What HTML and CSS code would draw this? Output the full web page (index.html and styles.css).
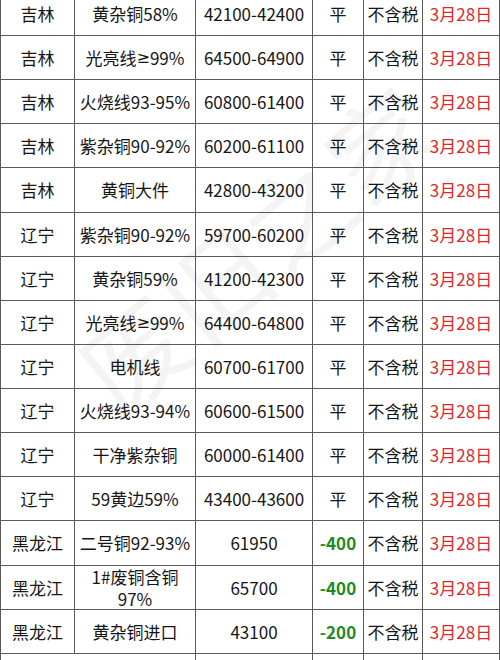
FILE: index.html
```html
<!DOCTYPE html>
<html lang="zh-CN">
<head>
<meta charset="utf-8">
<title>铜价表</title>
<link rel="stylesheet" href="styles.css">
</head>
<body>
<div class="page">
  <div class="table">
    <div class="row"><div class="c">吉林</div><div class="c">黄杂铜58%</div><div class="c">42100-42400</div><div class="c">平</div><div class="c">不含税</div><div class="c date">3月28日</div></div>
    <div class="row"><div class="c">吉林</div><div class="c">光亮线<span class="ge">≥</span>99%</div><div class="c">64500-64900</div><div class="c">平</div><div class="c">不含税</div><div class="c date">3月28日</div></div>
    <div class="row"><div class="c">吉林</div><div class="c">火烧线93-95%</div><div class="c">60800-61400</div><div class="c">平</div><div class="c">不含税</div><div class="c date">3月28日</div></div>
    <div class="row"><div class="c">吉林</div><div class="c">紫杂铜90-92%</div><div class="c">60200-61100</div><div class="c">平</div><div class="c">不含税</div><div class="c date">3月28日</div></div>
    <div class="row"><div class="c">吉林</div><div class="c">黄铜大件</div><div class="c">42800-43200</div><div class="c">平</div><div class="c">不含税</div><div class="c date">3月28日</div></div>
    <div class="row"><div class="c">辽宁</div><div class="c">紫杂铜90-92%</div><div class="c">59700-60200</div><div class="c">平</div><div class="c">不含税</div><div class="c date">3月28日</div></div>
    <div class="row"><div class="c">辽宁</div><div class="c">黄杂铜59%</div><div class="c">41200-42300</div><div class="c">平</div><div class="c">不含税</div><div class="c date">3月28日</div></div>
    <div class="row"><div class="c">辽宁</div><div class="c">光亮线<span class="ge">≥</span>99%</div><div class="c">64400-64800</div><div class="c">平</div><div class="c">不含税</div><div class="c date">3月28日</div></div>
    <div class="row"><div class="c">辽宁</div><div class="c">电机线</div><div class="c">60700-61700</div><div class="c">平</div><div class="c">不含税</div><div class="c date">3月28日</div></div>
    <div class="row"><div class="c">辽宁</div><div class="c">火烧线93-94%</div><div class="c">60600-61500</div><div class="c">平</div><div class="c">不含税</div><div class="c date">3月28日</div></div>
    <div class="row"><div class="c">辽宁</div><div class="c">干净紫杂铜</div><div class="c">60000-61400</div><div class="c">平</div><div class="c">不含税</div><div class="c date">3月28日</div></div>
    <div class="row"><div class="c">辽宁</div><div class="c">59黄边59%</div><div class="c">43400-43600</div><div class="c">平</div><div class="c">不含税</div><div class="c date">3月28日</div></div>
    <div class="row"><div class="c">黑龙江</div><div class="c">二号铜92-93%</div><div class="c">61950</div><div class="c down">-400</div><div class="c">不含税</div><div class="c date">3月28日</div></div>
    <div class="row"><div class="c">黑龙江</div><div class="c two">1#废铜含铜<br>97%</div><div class="c">65700</div><div class="c down">-400</div><div class="c">不含税</div><div class="c date">3月28日</div></div>
    <div class="row"><div class="c">黑龙江</div><div class="c">黄杂铜进口</div><div class="c">43100</div><div class="c down">-200</div><div class="c">不含税</div><div class="c date">3月28日</div></div>
    <div class="row tall"><div class="c">黑龙江</div><div class="c two">2#废黄铜含铁<br>95%</div><div class="c">38000</div><div class="c down">-200</div><div class="c">不含税</div><div class="c date">3月28日</div></div>
  </div>
  <div class="watermark">废旧之家</div>
</div>
</body>
</html>
```

FILE: styles.css
```css
html, body {
  margin: 0;
  padding: 0;
  background: #ffffff;
}

body {
  font-family: "Noto Sans CJK SC", "Noto Sans", sans-serif;
  color: #161616;
  overflow: hidden;
}

.page {
  position: relative;
  width: 500px;
  height: 660px;
  overflow: hidden;
}

.table {
  margin-top: -8.14px;
  display: flex;
  flex-direction: column;
}

.row {
  display: grid;
  grid-template-columns: 74px 121px 117px 51px 59px 78px;
  height: 44.14px;
  box-sizing: border-box;
  border-bottom: 1px solid #5a5a5a;
}

.row.tall {
  height: 66px;
}

.c {
  box-sizing: border-box;
  border-left: 1px solid #5a5a5a;
  display: flex;
  align-items: center;
  justify-content: center;
  text-align: center;
  font-size: 17px;
  line-height: 22px;
  white-space: nowrap;
  padding-top: 1px;
}

.c:last-child {
  border-right: 1px solid #5a5a5a;
}

.c.two {
  display: block;
  white-space: normal;
  line-height: 22px;
  padding-top: 0;
  align-self: center;
}

.ge {
  font-family: "DejaVu Sans", sans-serif;
  font-size: 16px;
}

.date {
  color: #e0262d;
}

.down {
  color: #1e8a22;
  font-weight: 700;
}

.watermark {
  position: absolute;
  left: 30px;
  top: 185px;
  width: 450px;
  text-align: center;
  font-size: 106px;
  line-height: 120px;
  color: rgba(0, 0, 0, 0.045);
  transform: rotate(-40deg);
  pointer-events: none;
  white-space: nowrap;
  letter-spacing: 2px;
}
```
